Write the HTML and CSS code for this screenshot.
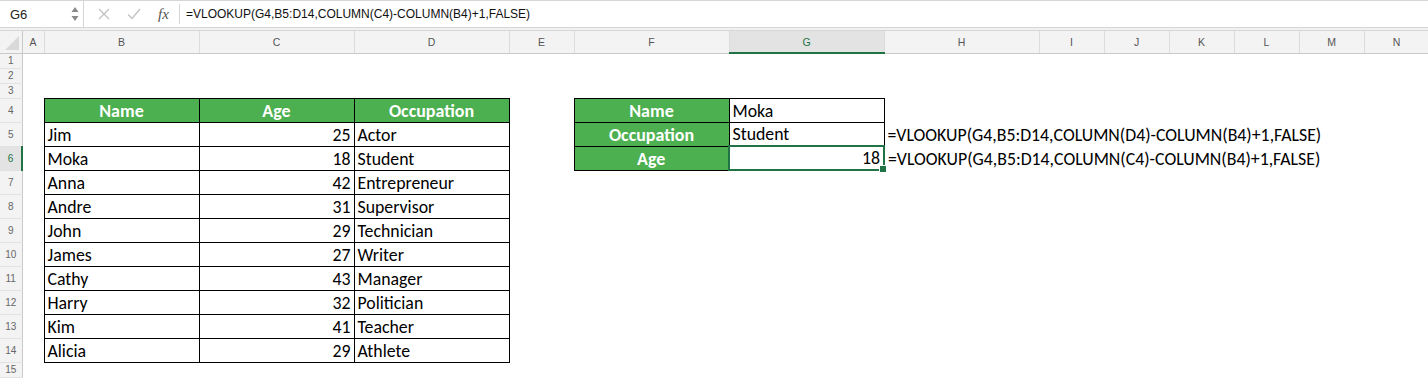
FILE: index.html
```html
<html>
<head>
  <link rel="stylesheet" href="styles.css">
</head>
<body>

<div class="formula_bar">
  <div class="name_box">
    <span class="cell_ref">G6</span>
    <svg class="spin" width="8" height="16" viewBox="0 0 8 16">
      <path d="M4 1 L7.5 6 L0.5 6 Z" fill="#8a8a8a"/>
      <path d="M4 15 L7.5 10 L0.5 10 Z" fill="#8a8a8a"/>
    </svg>
  </div>
  <div class="fb_tools">
    <svg class="tool_x" width="12" height="12" viewBox="0 0 12 12">
      <path d="M1 1 L11 11 M11 1 L1 11" stroke="#c2c2c2" stroke-width="1.3" fill="none"/>
    </svg>
    <svg class="tool_ok" width="14" height="12" viewBox="0 0 14 12">
      <path d="M1 6.5 L5 10.5 L13 1" stroke="#c2c2c2" stroke-width="1.3" fill="none"/>
    </svg>
    <span class="fx">fx</span>
  </div>
  <div class="fb_input">=VLOOKUP(G4,B5:D14,COLUMN(C4)-COLUMN(B4)+1,FALSE)</div>
</div>
<div class="fb_gap"></div>

<table class="sheet">
  <colgroup>
    <col class="w_rh">
    <col class="w_a">
    <col class="w_wide"><col class="w_wide"><col class="w_wide">
    <col class="w_std">
    <col class="w_wide"><col class="w_wide"><col class="w_wide">
    <col class="w_std"><col class="w_std"><col class="w_std"><col class="w_std"><col class="w_std"><col class="w_std">
  </colgroup>
  <thead>
    <tr class="col_heads">
      <th class="corner"><div class="corner_tri"></div></th>
      <th>A</th><th>B</th><th>C</th><th>D</th><th>E</th><th>F</th>
      <th class="sel_col">G</th>
      <th>H</th><th>I</th><th>J</th><th>K</th><th>L</th><th>M</th><th>N</th>
    </tr>
  </thead>
  <tbody>
    <tr class="r_sm"><th class="rh">1</th><td></td><td></td><td></td><td></td><td></td><td></td><td></td><td></td><td></td><td></td><td></td><td></td><td></td><td></td></tr>
    <tr class="r_sm"><th class="rh">2</th><td></td><td></td><td></td><td></td><td></td><td></td><td></td><td></td><td></td><td></td><td></td><td></td><td></td><td></td></tr>
    <tr class="r_sm"><th class="rh">3</th><td></td><td></td><td></td><td></td><td></td><td></td><td></td><td></td><td></td><td></td><td></td><td></td><td></td><td></td></tr>
    <tr class="r_lg">
      <th class="rh">4</th><td></td>
      <td class="t hd">Name</td><td class="t hd">Age</td><td class="t hd">Occupation</td>
      <td></td>
      <td class="t hd">Name</td><td class="t">Moka</td>
      <td></td><td></td><td></td><td></td><td></td><td></td><td></td>
    </tr>
    <tr class="r_lg">
      <th class="rh">5</th><td></td>
      <td class="t">Jim</td><td class="t num">25</td><td class="t">Actor</td>
      <td></td>
      <td class="t hd">Occupation</td><td class="t">Student</td>
      <td class="formula">=VLOOKUP(G4,B5:D14,COLUMN(D4)-COLUMN(B4)+1,FALSE)</td>
      <td></td><td></td><td></td><td></td><td></td><td></td>
    </tr>
    <tr class="r_lg">
      <th class="rh sel_row">6</th><td></td>
      <td class="t">Moka</td><td class="t num">18</td><td class="t">Student</td>
      <td></td>
      <td class="t hd">Age</td><td class="t num sel_cell">18<span class="handle"></span></td>
      <td class="formula">=VLOOKUP(G4,B5:D14,COLUMN(C4)-COLUMN(B4)+1,FALSE)</td>
      <td></td><td></td><td></td><td></td><td></td><td></td>
    </tr>
    <tr class="r_lg"><th class="rh">7</th><td></td><td class="t">Anna</td><td class="t num">42</td><td class="t">Entrepreneur</td><td></td><td></td><td></td><td></td><td></td><td></td><td></td><td></td><td></td><td></td></tr>
    <tr class="r_lg"><th class="rh">8</th><td></td><td class="t">Andre</td><td class="t num">31</td><td class="t">Supervisor</td><td></td><td></td><td></td><td></td><td></td><td></td><td></td><td></td><td></td><td></td></tr>
    <tr class="r_lg"><th class="rh">9</th><td></td><td class="t">John</td><td class="t num">29</td><td class="t">Technician</td><td></td><td></td><td></td><td></td><td></td><td></td><td></td><td></td><td></td><td></td></tr>
    <tr class="r_lg"><th class="rh">10</th><td></td><td class="t">James</td><td class="t num">27</td><td class="t">Writer</td><td></td><td></td><td></td><td></td><td></td><td></td><td></td><td></td><td></td><td></td></tr>
    <tr class="r_lg"><th class="rh">11</th><td></td><td class="t">Cathy</td><td class="t num">43</td><td class="t">Manager</td><td></td><td></td><td></td><td></td><td></td><td></td><td></td><td></td><td></td><td></td></tr>
    <tr class="r_lg"><th class="rh">12</th><td></td><td class="t">Harry</td><td class="t num">32</td><td class="t">Politician</td><td></td><td></td><td></td><td></td><td></td><td></td><td></td><td></td><td></td><td></td></tr>
    <tr class="r_lg"><th class="rh">13</th><td></td><td class="t">Kim</td><td class="t num">41</td><td class="t">Teacher</td><td></td><td></td><td></td><td></td><td></td><td></td><td></td><td></td><td></td><td></td></tr>
    <tr class="r_lg"><th class="rh">14</th><td></td><td class="t">Alicia</td><td class="t num">29</td><td class="t">Athlete</td><td></td><td></td><td></td><td></td><td></td><td></td><td></td><td></td><td></td><td></td></tr>
    <tr class="r_sm"><th class="rh">15</th><td></td><td></td><td></td><td></td><td></td><td></td><td></td><td></td><td></td><td></td><td></td><td></td><td></td><td></td></tr>
  </tbody>
</table>

</body>
</html>
```

FILE: styles.css
```css
body{
  margin: 0;
  background: #fff;
  overflow: hidden;
  font-family: "Liberation Sans", Arial, sans-serif;
}

/* formula bar */
.formula_bar{
  display: flex;
  align-items: center;
  height: 28px;
  border-top: 1px solid #d6d6d6;
  border-bottom: 1px solid #d6d6d6;
  box-sizing: border-box;
}
.name_box{
  display: flex;
  align-items: center;
  justify-content: space-between;
  width: 84px;
  height: 100%;
  padding: 0 4px 0 10px;
  box-sizing: border-box;
  border-right: 1px solid #d6d6d6;
}
.cell_ref{
  font-size: 13px;
  color: #222;
}
.fb_tools{
  display: flex;
  align-items: center;
  width: 96px;
  height: 20px;
  border-right: 1px solid #d6d6d6;
  box-sizing: border-box;
}
.tool_x{
  margin-left: 14px;
}
.tool_ok{
  margin-left: 17px;
}
.fx{
  margin-left: 17px;
  font-family: "Liberation Serif", "Times New Roman", serif;
  font-style: italic;
  font-size: 15px;
  color: #555;
}
.fb_input{
  padding-left: 6px;
  font-size: 12px;
  color: #111;
  white-space: nowrap;
}
.fb_gap{
  height: 2px;
  background: #f1f1f1;
  border-bottom: 1px solid #d6d6d6;
}

/* grid */
.sheet{
  table-layout: fixed;
  border-collapse: collapse;
  width: 1429px;
}
.w_rh{ width: 22px; }
.w_a{ width: 22px; }
.w_wide{ width: 155px; }
.w_std{ width: 65px; }

.col_heads th{
  height: 22px;
  padding: 0;
  background: #f3f3f3;
  border-right: 1px solid #dcdcdc;
  border-bottom: 1px solid #c9c9c9;
  font-family: "Liberation Sans", Arial, sans-serif;
  font-weight: normal;
  font-size: 10.5px;
  color: #555;
}
.col_heads .corner{
  position: relative;
  border-right: 1px solid #c9c9c9;
}
.corner_tri{
  position: absolute;
  right: 3px;
  bottom: 3px;
  width: 0;
  height: 0;
  border-left: 14px solid transparent;
  border-bottom: 14px solid #d9d9d9;
}
.col_heads .sel_col{
  background: #e3e3e3;
  color: #217346;
  border-bottom: 2px solid #217346;
}

.rh{
  padding: 0;
  background: #f3f3f3;
  border-right: 1px solid #c9c9c9;
  border-bottom: 1px solid #e2e2e2;
  font-weight: normal;
  font-size: 10px;
  color: #666;
  text-align: center;
}
.rh.sel_row{
  background: #e3e3e3;
  color: #217346;
  border-right: 2px solid #217346;
}

.r_sm{ height: 15px; }
.r_lg{ height: 24px; }
.r_sm td, .r_lg td{
  padding: 0 3px 1px 3px;
  vertical-align: bottom;
}

td{
  font-family: Carlito, Calibri, Lato, "Liberation Sans", sans-serif;
  font-size: 17.8px;
  color: #000;
  white-space: nowrap;
  overflow: visible;
  line-height: 20px;
}
.t{
  border: 1px solid #000;
}
.hd{
  background: #4caf50;
  color: #fff;
  font-weight: bold;
  font-size: 18px;
  text-align: center;
}
.num{
  text-align: right;
}
.formula{
  padding-left: 2px;
}
td.sel_cell{
  position: relative;
  border: 2px solid #217346;
}
.handle{
  position: absolute;
  right: -4px;
  bottom: -4px;
  width: 6px;
  height: 6px;
  background: #217346;
  border: 1px solid #fff;
}
```
